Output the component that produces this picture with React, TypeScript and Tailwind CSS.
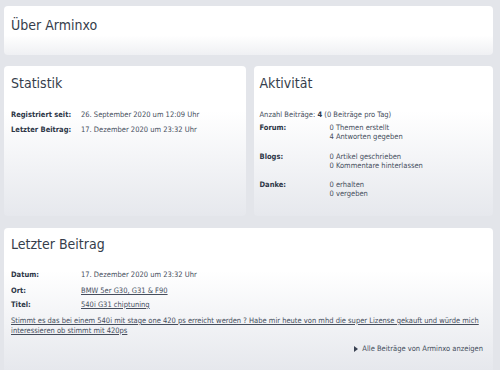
const font = { fontFamily: '"DejaVu Sans Condensed", "DejaVu Sans", sans-serif' };

// Panel with the soft white-to-gray fade
const Panel = ({ className, children }: { className?: string; children: React.ReactNode }) => (
  <div className={"rounded-[4px] bg-gradient-to-b from-white from-30% to-[#e6e8ed] " + (className ?? "")}>
    {children}
  </div>
);

const Title = ({ children }: { children: React.ReactNode }) => (
  <h2 className="text-[14px] leading-[16px] text-[#353d4b]">{children}</h2>
);

const Row = ({ label, children, className }: { label: string; children: React.ReactNode; className?: string }) => (
  <div className={"flex " + (className ?? "")}>
    <span className="w-[70px] shrink-0 font-bold text-[#2c3546]">{label}</span>
    <div>{children}</div>
  </div>
);

const ActRow = ({ label, lines, className }: { label: string; lines: string[]; className?: string }) => (
  <div className={"flex " + (className ?? "")}>
    <span className="w-[70px] shrink-0 font-bold text-[#2c3546]">{label}</span>
    <div>
      {lines.map((l) => (
        <div key={l}>{l}</div>
      ))}
    </div>
  </div>
);

export default function App() {
  return (
    <div
      style={font}
      className="flex h-[370px] w-[500px] flex-col overflow-hidden bg-[#e3e5ea] pl-[4px] pr-[7px] pt-[6px] text-[7.5px] leading-[9px] text-[#454d5c]"
    >
      <Panel className="h-[49px] from-60% to-[#eff0f3] px-[7px] pt-[11px]">
        <Title>Über Arminxo</Title>
      </Panel>

      <div className="mt-[11px] flex h-[150px] gap-[8px]">
        <Panel className="flex-1 px-[7px] pt-[9px]">
          <Title>Statistik</Title>
          <Row label="Registriert seit:" className="mt-[19px]">
            26. September 2020 um 12:09 Uhr
          </Row>
          <Row label="Letzter Beitrag:" className="mt-[6px]">
            17. Dezember 2020 um 23:32 Uhr
          </Row>
        </Panel>
        <Panel className="flex-1 px-[6px] pt-[9px]">
          <Title>Aktivität</Title>
          <div className="mt-[19px]">
            Anzahl Beiträge: <b className="text-[#2c3546]">4</b> (0 Beiträge pro Tag)
          </div>
          <ActRow label="Forum:" className="mt-[4px]" lines={["0 Themen erstellt", "4 Antworten gegeben"]} />
          <ActRow label="Blogs:" className="mt-[11px]" lines={["0 Artikel geschrieben", "0 Kommentare hinterlassen"]} />
          <ActRow label="Danke:" className="mt-[10px]" lines={["0 erhalten", "0 vergeben"]} />
        </Panel>
      </div>

      <Panel className="mt-[12px] flex-1 rounded-b-none px-[7px] pt-[8px]">
        <Title>Letzter Beitrag</Title>
        <Row label="Datum:" className="mt-[18px]">
          17. Dezember 2020 um 23:32 Uhr
        </Row>
        <Row label="Ort:" className="mt-[7px]">
          <a className="underline">BMW 5er G30, G31 &amp; F90</a>
        </Row>
        <Row label="Titel:" className="mt-[5px]">
          <a className="underline">540i G31 chiptuning</a>
        </Row>
        <p className="mt-[7px] pr-[4px] leading-[10px] underline">
          Stimmt es das bei einem 540i mit stage one 420 ps erreicht werden ? Habe mir heute von mhd die super Lizense
          gekauft und würde mich interessieren ob stimmt mit 420ps
        </p>
        <div className="mt-[8px] flex items-center justify-end gap-[4px] pr-[3px]">
          <span className="h-0 w-0 border-y-[3px] border-l-[4px] border-y-transparent border-l-[#3a4252]" />
          <span>Alle Beiträge von Arminxo anzeigen</span>
        </div>
      </Panel>
    </div>
  );
}
